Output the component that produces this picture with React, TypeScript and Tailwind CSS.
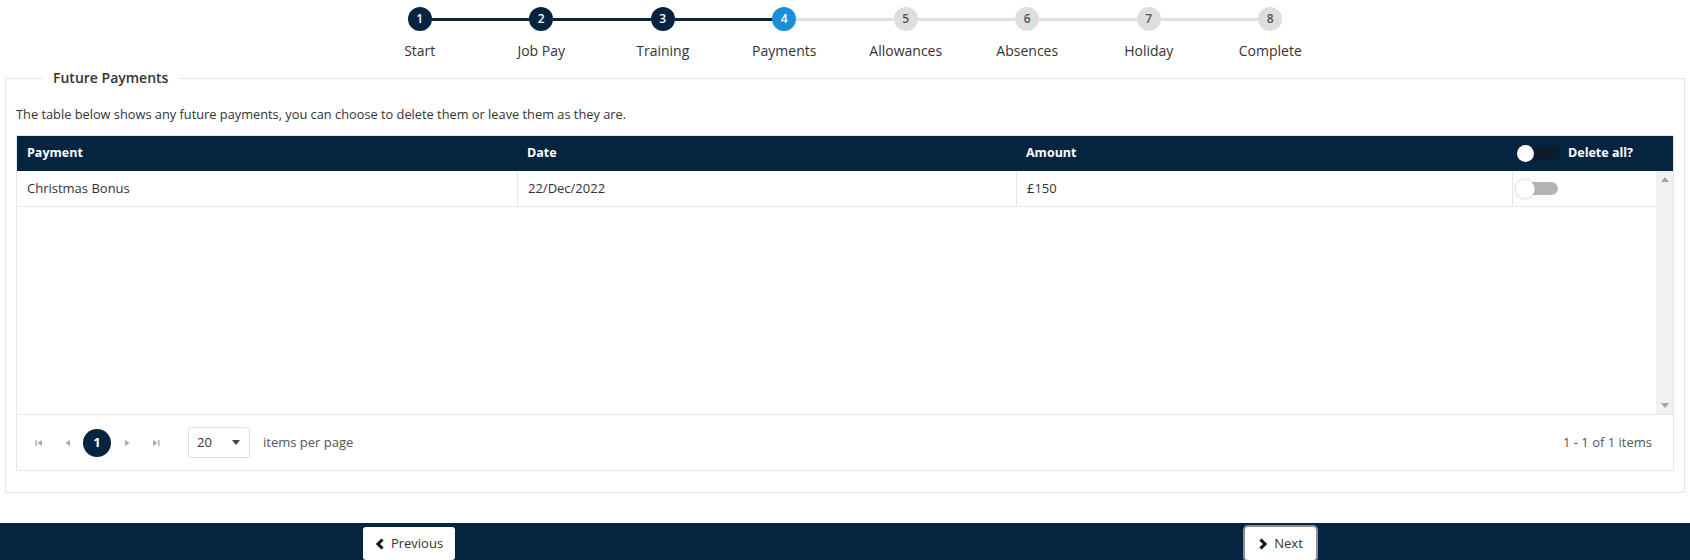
import React from "react"

const steps = ["Start", "Job Pay", "Training", "Payments", "Allowances", "Absences", "Holiday", "Complete"]
const current = 4

const Stepper: React.FC = () => {
  return (
    <div className="pt-[7px]">
      <div className="flex items-center justify-center">
        {steps.map((s, i) => {
          const n = i + 1
          const circle =
            n < current
              ? "bg-[#05243f] text-white"
              : n === current
              ? "bg-[#1a8fd7] text-white"
              : "bg-[#dedede] text-[#555]"
          return (
            <React.Fragment key={s}>
              <div
                className={`w-[24px] h-[24px] rounded-full flex items-center justify-center text-[12px] font-semibold ${circle}`}
              >
                {n}
              </div>
              {i < steps.length - 1 &&
                (n < current ? (
                  <div className="w-[97.5px] h-[3px] bg-[#05243f]" />
                ) : (
                  <div className="w-[97.5px] h-[3px] bg-[#e0e0e0]" />
                ))}
            </React.Fragment>
          )
        })}
      </div>
      <div className="flex justify-center mt-[10px]">
        {steps.map((s) => (
          <div key={s} className="w-[121.5px] text-center text-[14px] leading-[20px] text-[#333]">
            {s}
          </div>
        ))}
      </div>
    </div>
  )
}

const Toggle: React.FC<{ dark?: boolean }> = ({ dark }) => {
  if (dark) {
    return (
      <div className="relative w-[43px] h-[17px] flex items-center">
        <div className="absolute left-[7px] right-0 h-[13px] rounded-full bg-[#0c1a2c]" />
        <div className="absolute left-0 w-[17px] h-[17px] rounded-full bg-white" />
      </div>
    )
  }
  return (
    <div className="relative w-[43px] h-[20px] flex items-center">
      <div className="absolute left-[9px] right-0 h-[13px] rounded-full bg-[#b5b5b5]" />
      <div className="absolute left-0 w-[20px] h-[20px] rounded-full bg-white shadow-[0_0_2px_rgba(0,0,0,0.25)] border border-[#eee]" />
    </div>
  )
}

const PagerIcon: React.FC<{ kind: "first" | "prev" | "next" | "last" }> = ({ kind }) => {
  return (
    <svg width="10" height="10" viewBox="0 0 10 10" className="fill-[#a8a8a8]">
      {kind === "first" && (
        <>
          <rect x="1.5" y="2" width="1.3" height="6" />
          <path d="M8 2 L3.5 5 L8 8 Z" />
        </>
      )}
      {kind === "prev" && <path d="M7 2 L2.5 5 L7 8 Z" />}
      {kind === "next" && <path d="M3 2 L7.5 5 L3 8 Z" />}
      {kind === "last" && (
        <>
          <path d="M2 2 L6.5 5 L2 8 Z" />
          <rect x="7.2" y="2" width="1.3" height="6" />
        </>
      )}
    </svg>
  )
}

export default function App() {
  return (
    <div
      className="w-full h-[560px] bg-white flex flex-col overflow-hidden"
      style={{ fontFamily: '"Open Sans", "Noto Sans", sans-serif' }}
    >
      <Stepper />

      <fieldset className="mx-[5px] mt-[7px] border border-[#e6e6e6] px-[10px] pb-[21px]">
        <legend className="ml-[27px] px-[10px] text-[14px] leading-[20px] font-semibold text-[#333]">
          Future Payments
        </legend>
        <p className="mt-[17px] text-[12.8px] leading-[18px] text-[#333]">
          The table below shows any future payments, you can choose to delete them or leave them as they are.
        </p>

        <div className="mt-[12px] border border-[#e6e6e6]">
          <div className="flex h-[35px] items-center bg-[#05243f] text-white text-[12.5px] font-bold">
            <div className="w-[500px] pl-[10px]">Payment</div>
            <div className="w-[499px] pl-[10px]">Date</div>
            <div className="w-[496px] pl-[10px]">Amount</div>
            <div className="flex-1 flex items-center pl-[5px] gap-[8px]">
              <Toggle dark />
              <span>Delete all?</span>
            </div>
          </div>

          <div className="flex h-[243px]">
            <div className="flex-1">
              <div className="flex h-[36px] border-b border-[#e6e6e6] text-[13px] text-[#333]">
                <div className="w-[500px] pl-[10px] flex items-center">Christmas Bonus</div>
                <div className="w-[499px] pl-[10px] flex items-center border-l border-[#e6e6e6]">22/Dec/2022</div>
                <div className="w-[496px] pl-[10px] flex items-center border-l border-[#e6e6e6]">£150</div>
                <div className="flex-1 pl-[2px] flex items-center border-l border-[#e6e6e6]">
                  <Toggle />
                </div>
              </div>
            </div>
            <div className="w-[17px] bg-[#f1f1f1] flex flex-col justify-between items-center py-[6px]">
              <svg width="8" height="5" viewBox="0 0 8 5" className="fill-[#a3a3a3]">
                <path d="M0 5 L4 0 L8 5 Z" />
              </svg>
              <svg width="8" height="5" viewBox="0 0 8 5" className="fill-[#a3a3a3]">
                <path d="M0 0 L4 5 L8 0 Z" />
              </svg>
            </div>
          </div>

          <div className="flex h-[56px] items-center border-t border-[#e6e6e6] text-[13px] text-[#555]">
            <div className="flex items-center pl-[17px]">
              <div className="w-[10px] flex justify-center"><PagerIcon kind="first" /></div>
              <div className="w-[10px] ml-[19px] flex justify-center"><PagerIcon kind="prev" /></div>
              <div className="ml-[10px] w-[28px] h-[28px] rounded-full bg-[#05243f] text-white font-bold text-[13px] flex items-center justify-center">
                1
              </div>
              <div className="w-[10px] ml-[11px] flex justify-center"><PagerIcon kind="next" /></div>
              <div className="w-[10px] ml-[19px] flex justify-center"><PagerIcon kind="last" /></div>
            </div>
            <div className="ml-[27px] w-[62px] h-[31px] border border-[#dedede] rounded-[3px] flex items-center justify-between pl-[8px] pr-[9px] text-[#333]">
              <span>20</span>
              <svg width="8" height="5" viewBox="0 0 8 5" className="fill-[#444]">
                <path d="M0 0 L4 5 L8 0 Z" />
              </svg>
            </div>
            <span className="ml-[13px]">items per page</span>
            <span className="ml-auto pr-[21px]">1 - 1 of 1 items</span>
          </div>
        </div>
      </fieldset>

      <div className="mt-auto h-[37px] bg-[#05243f] flex items-start pt-[4px]">
        <div className="ml-[363px] w-[953px] flex justify-between">
          <button className="h-[33px] w-[92px] bg-white rounded-[3px] flex items-center justify-center gap-[6px] text-[13px] text-[#333]">
            <svg width="10" height="12" viewBox="0 0 10 12" className="stroke-[#111]" fill="none">
              <path d="M7.5 1.5 L3 6 L7.5 10.5" strokeWidth="3" />
            </svg>
            Previous
          </button>
          <button className="h-[33px] w-[71px] bg-white rounded-[3px] ring-2 ring-[#8a8f96] flex items-center justify-center gap-[6px] text-[13px] text-[#333]">
            <svg width="10" height="12" viewBox="0 0 10 12" className="stroke-[#111]" fill="none">
              <path d="M2.5 1.5 L7 6 L2.5 10.5" strokeWidth="3" />
            </svg>
            Next
          </button>
        </div>
      </div>
    </div>
  )
}
